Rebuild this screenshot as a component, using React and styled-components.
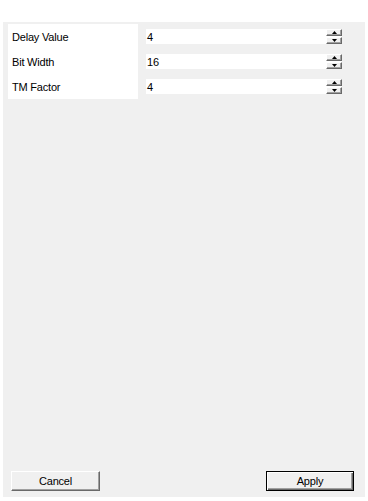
import React from "react";
import styled, { createGlobalStyle } from "styled-components";

const Global = createGlobalStyle`
  html, body { margin: 0; padding: 0; background: #ffffff; }
  body { font-family: "Liberation Sans", Arial, sans-serif; font-size: 11px; color: #000; }
  #root { width: 368px; height: 501px; }
`;

const Page = styled.div`
  width: 368px;
  height: 501px;
  box-sizing: border-box;
  padding: 22px 3px 4px 3px;
  display: flex;
`;

const Panel = styled.div`
  flex: 1;
  background: #f0f0f0;
  display: flex;
  flex-direction: column;
  padding: 2px 11px 6px 5px;
`;

const Form = styled.div`
  display: flex;
  gap: 8px;
`;

const LabelColumn = styled.div`
  width: 130px;
  background: #ffffff;
  display: flex;
  flex-direction: column;
`;

const ValueColumn = styled.div`
  display: flex;
  flex-direction: column;
`;

const Label = styled.div`
  height: 25px;
  display: flex;
  align-items: center;
  padding-left: 4px;
  padding-top: 1px;
  box-sizing: border-box;
  font-size: 11px;
  letter-spacing: -0.2px;
`;

const Row = styled.div`
  height: 25px;
  display: flex;
  align-items: center;
`;

const Field = styled.div`
  width: 180px;
  height: 15px;
  background: #ffffff;
  display: flex;
  align-items: center;
  padding-left: 1px;
  box-sizing: border-box;
  font-size: 11px;
  padding-top: 1px;
`;

const Spinner = styled.div`
  width: 16px;
  height: 15px;
  display: flex;
  flex-direction: column;
  gap: 1px;
  background: #ffffff;
`;

const SpinButton = styled.div`
  flex: 1;
  box-sizing: border-box;
  background: #f0f0f0;
  border-top: 1px solid #ffffff;
  border-left: 1px solid #ffffff;
  border-right: 1px solid #696969;
  border-bottom: 1px solid #696969;
  box-shadow: inset -1px -1px 0 #a0a0a0;
  display: flex;
  align-items: center;
  justify-content: center;
`;

const Spacer = styled.div`
  flex: 1;
`;

const Footer = styled.div`
  display: flex;
  justify-content: space-between;
  padding-left: 3px;
`;

const Button = styled.button`
  width: ${(p) => (p.$default ? "88px" : "89px")};
  height: 20px;
  padding: 0;
  margin: 0;
  font-family: "Liberation Sans", Arial, sans-serif;
  font-size: 11px;
  letter-spacing: -0.2px;
  color: #000;
  background: #f0f0f0;
  box-sizing: border-box;
  border-style: solid;
  border-width: 1px;
  border-color: ${(p) => (p.$default ? "#000000" : "#ffffff #696969 #696969 #ffffff")};
  box-shadow: ${(p) =>
    p.$default
      ? "inset 1px 1px 0 #ffffff, inset -1px -1px 0 #696969, inset -2px -2px 0 #a0a0a0"
      : "inset -1px -1px 0 #a0a0a0"};
  display: flex;
  align-items: center;
  justify-content: center;
`;

const Arrow = ({ up }) => (
  <svg width="5" height="3" viewBox="0 0 5 3">
    {up ? <polygon points="2.5,0 5,3 0,3" fill="#000" /> : <polygon points="0,0 5,0 2.5,3" fill="#000" />}
  </svg>
);

const rows = [
  { label: "Delay Value", value: "4" },
  { label: "Bit Width", value: "16" },
  { label: "TM Factor", value: "4" },
];

export default function App() {
  return (
    <>
      <Global />
      <Page>
        <Panel>
          <Form>
            <LabelColumn>
              {rows.map((r) => (
                <Label key={r.label}>{r.label}</Label>
              ))}
            </LabelColumn>
            <ValueColumn>
              {rows.map((r) => (
                <Row key={r.label}>
                  <Field>{r.value}</Field>
                  <Spinner>
                    <SpinButton>
                      <Arrow up />
                    </SpinButton>
                    <SpinButton>
                      <Arrow />
                    </SpinButton>
                  </Spinner>
                </Row>
              ))}
            </ValueColumn>
          </Form>
          <Spacer />
          <Footer>
            <Button>Cancel</Button>
            <Button $default>Apply</Button>
          </Footer>
        </Panel>
      </Page>
    </>
  );
}
